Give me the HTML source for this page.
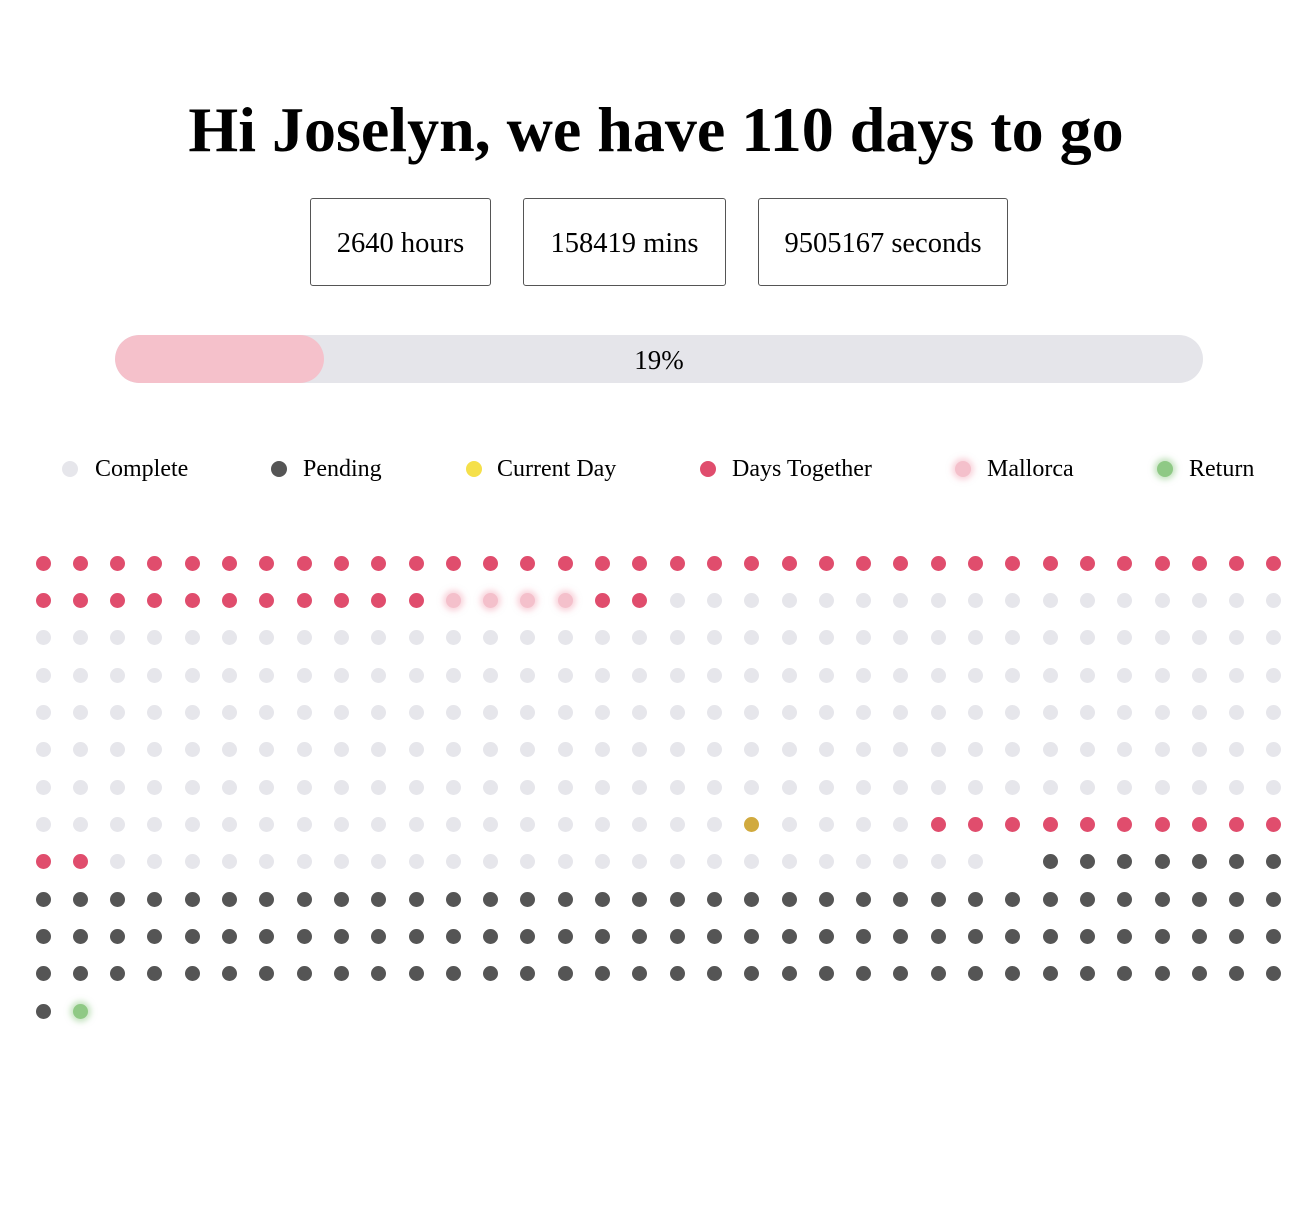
<!DOCTYPE html>
<html><head><meta charset="utf-8"><style>
body{margin:0;width:1312px;height:1210px;background:#fff;font-family:"Liberation Serif",serif;position:relative;overflow:hidden}
h1{position:absolute;top:90px;left:0;width:1312px;text-align:center;margin:0;font-size:64px;font-weight:bold;line-height:80px}
.box{position:absolute;top:198px;height:88px;border:1.5px solid #555;border-radius:3px;box-sizing:border-box;font-size:28.5px;display:flex;align-items:center;justify-content:center;padding-top:3px}
.bar{position:absolute;left:115px;top:335px;width:1088px;height:48px;border-radius:24px;background:#e5e5ea;overflow:hidden}
.fill{position:absolute;left:0;top:0;height:48px;width:209px;background:#f5c1cb;border-radius:24px}
.pct{position:absolute;left:0;top:1px;width:100%;text-align:center;line-height:48px;font-size:27px}
.lg{position:absolute;top:455px;font-size:24px;line-height:28px}
.ld{position:absolute;width:16px;height:16px;border-radius:50%;top:461px}
.d{position:absolute;width:15px;height:15px;border-radius:50%}
.c{background:#e6e6eb}.p{background:#555}.r{background:#e04d6d}
.m{background:#f4c0cb;box-shadow:0 0 6px 3px rgba(244,170,185,.5)}
.g{background:#d1aa3e}
.n{background:#8fc985;box-shadow:0 0 6px 3px rgba(143,201,133,.5)}
</style></head><body>
<h1>Hi Joselyn, we have 110 days to go</h1>
<div class="box" style="left:310px;width:181px">2640 hours</div>
<div class="box" style="left:523px;width:203px">158419 mins</div>
<div class="box" style="left:758px;width:250px">9505167 seconds</div>
<div class="bar"><div class="fill"></div><div class="pct">19%</div></div>
<div class="ld" style="left:62px;background:#e6e6eb"></div><div class="lg" style="left:95px">Complete</div>
<div class="ld" style="left:271px;background:#555"></div><div class="lg" style="left:303px">Pending</div>
<div class="ld" style="left:466px;background:#f5e04a"></div><div class="lg" style="left:497px">Current Day</div>
<div class="ld" style="left:700px;background:#e04d6d"></div><div class="lg" style="left:732px">Days Together</div>
<div class="ld" style="left:955px;background:#f4c0cb;box-shadow:0 0 6px 3px rgba(244,170,185,.5)"></div><div class="lg" style="left:987px">Mallorca</div>
<div class="ld" style="left:1157px;background:#8fc985;box-shadow:0 0 6px 3px rgba(143,201,133,.5)"></div><div class="lg" style="left:1189px">Return</div>
<div id="g"></div>
<script>
var rows=[];
function rep(t,n){var a=[];for(var i=0;i<n;i++)a.push(t);return a;}
rows.push(rep('r',34));
rows.push(rep('r',11).concat(rep('m',4),rep('r',2),rep('c',17)));
for(var k=0;k<5;k++)rows.push(rep('c',34));
rows.push(rep('c',19).concat(['g'],rep('c',4),rep('r',10)));
rows.push(rep('r',2).concat(rep('c',24),['x'],rep('p',7)));
for(var k=0;k<3;k++)rows.push(rep('p',34));
rows.push(['p','n']);
var h='';
rows.forEach(function(r,ri){r.forEach(function(t,ci){if(t=='x')return;
var x=43+ci*37.3-7.5,y=563+ri*37.35-7.5;
h+='<div class="d '+t+'" style="left:'+x.toFixed(1)+'px;top:'+y.toFixed(1)+'px"></div>';});});
document.getElementById('g').innerHTML=h;
</script>
</body></html>
